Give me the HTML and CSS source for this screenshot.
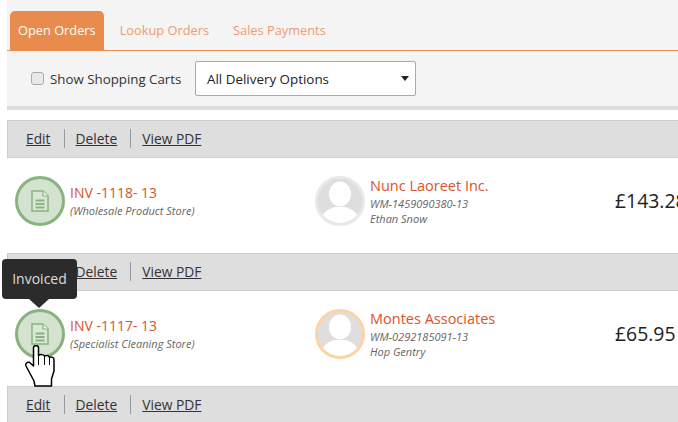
FILE: index.html
```html
<!DOCTYPE html>
<html>
<head>
<meta charset="utf-8" />
<title>Orders</title>
<link rel="stylesheet" href="styles.css">
</head>
<body>
<div class="page">
	<div class="tabs">
		<a class="tab active">Open Orders</a>
		<a class="tab">Lookup Orders</a>
		<a class="tab">Sales Payments</a>
	</div>
	<div class="filters">
		<label class="check"><input type="checkbox" /> <span>Show Shopping Carts</span></label>
		<div class="select">All Delivery Options<i class="arrow"></i></div>
	</div>

	<div class="actions">
		<a>Edit</a><a>Delete</a><a>View PDF</a>
	</div>
	<div class="order">
		<div class="invoice">
			<div class="status">
				<svg width="18" height="22" viewBox="0 0 18 22"><path class="doc" d="M1 1h11l5 5v15h-16z"/><path class="fold" d="M12 1v5h5"/><path class="lines" d="M4.500 10.500h9M4.500 14h9M4.500 17.500h9"/></svg>
			</div>
			<div class="info">
				<div class="title">INV -1118- 13</div>
				<div class="sub">(Wholesale Product Store)</div>
			</div>
		</div>
		<div class="customer">
			<div class="avatar">
				<svg width="44" height="44" viewBox="0 0 44 44"><ellipse cx="22" cy="15" rx="11" ry="12.500" fill="#fff"/><path d="M2 44c1-11 10-15 15-16h10c5 1 14 5 15 16z" fill="#fff"/></svg>
			</div>
			<div class="info">
				<div class="name">Nunc Laoreet Inc.</div>
				<div class="sub">WM-1459090380-13</div>
				<div class="sub">Ethan Snow</div>
			</div>
		</div>
		<div class="price">£143.28</div>
	</div>

	<div class="actions">
		<a>Edit</a><a>Delete</a><a>View PDF</a>
	</div>
	<div class="order">
		<div class="invoice">
			<div class="status">
				<svg width="18" height="22" viewBox="0 0 18 22"><path class="doc" d="M1 1h11l5 5v15h-16z"/><path class="fold" d="M12 1v5h5"/><path class="lines" d="M4.500 10.500h9M4.500 14h9M4.500 17.500h9"/></svg>
				<div class="tip">Invoiced</div>
				<svg class="hand" width="31" height="43" viewBox="0 0 31 43"><path d="M8.500 21V2.500c0-2.500 5-2.500 5 0v8c2-1.500 5-1 6 .5 2-1 4.500-.5 5 1.500 2-1 4.500 0 4.500 2V26l-2.500 8v7H10l-1-5-8-15c-1-2 1-4 3-4z" fill="#fff" stroke="#000" stroke-width="1.500" stroke-linejoin="round"/><path d="M13.500 10v10M19.500 11v9M24.500 13v7" stroke="#000" stroke-width="1" fill="none"/></svg>
			</div>
			<div class="info">
				<div class="title">INV -1117- 13</div>
				<div class="sub">(Specialist Cleaning Store)</div>
			</div>
		</div>
		<div class="customer">
			<div class="avatar warm">
				<svg width="44" height="44" viewBox="0 0 44 44"><ellipse cx="22" cy="15" rx="11" ry="12.500" fill="#fff"/><path d="M2 44c1-11 10-15 15-16h10c5 1 14 5 15 16z" fill="#fff"/></svg>
			</div>
			<div class="info">
				<div class="name">Montes Associates</div>
				<div class="sub">WM-0292185091-13</div>
				<div class="sub">Hop Gentry</div>
			</div>
		</div>
		<div class="price">£65.95</div>
	</div>

	<div class="actions">
		<a>Edit</a><a>Delete</a><a>View PDF</a>
	</div>
</div>
</body>
</html>
```
FILE: styles.css
```css
*{ margin:0; padding:0; box-sizing:border-box;}
html,body{ height:100%; overflow:hidden; background:#fff;}
body{ font-family:"Open Sans",sans-serif; font-size:14px; color:#333;}
.page{ width:800px; margin-left:7px;}

.tabs{ display:flex; height:51px; padding:11px 0 0 3px; background:#f4f4f4; border-bottom:1px solid #e98b4c;}
.tab{ height:39px; padding:0 8px; margin-right:8px; line-height:39px; font-size:12.800px; color:#ef9a72;}
.tab.active{ background:#e98b4c; color:#fff; border-radius:5px 5px 0 0;}

.filters{ display:flex; align-items:center; height:59px; padding:0 0 0 24px; background:#f4f4f4; border-bottom:4px solid #dcdcdc;}
.check{ display:flex; align-items:center; width:164px; font-size:13.300px; color:#333;}
.check input{ appearance:none; width:13px; height:13px; margin-right:6px; background:#e9e9e9; border:1px solid #aaa; border-radius:3px;}
.select{ position:relative; width:221px; height:35px; line-height:35px; padding-left:11px; background:#fff; border:1px solid #aaa; border-radius:2px; font-size:13.400px; color:#222;}
.arrow{ position:absolute; right:6px; top:14px; border:4px solid transparent; border-top:5px solid #222; border-bottom:0;}

.actions{ display:flex; align-items:center; height:38px; padding:0 0 2px 7px; background:#dedede; border:1px solid #ccc; border-right:0;}
.filters + .actions{ margin-top:10px;}
.actions a{ padding:0 13px 0 11px; font-size:13.800px; line-height:19px; color:#333; text-decoration:underline; border-left:1px solid #999;}
.actions a:first-child{ border-left:0;}

.order{ display:flex; align-items:flex-start; height:95px; padding-top:18px; background:#fff;}
.invoice{ display:flex; width:308px; padding-left:8px;}
.invoice .info{ padding-top:7px;}
.status{ position:relative; display:flex; align-items:center; justify-content:center; flex:none; width:50px; height:50px; margin-right:5px; border:3px solid #8ab27f; border-radius:50%; background:#d3e3d0;}
.doc{ fill:#d8e8d5; stroke:#8ab27f; stroke-width:1.500;}
.fold{ fill:#eef5ec; stroke:#8ab27f; stroke-width:1.200;}
.lines{ fill:none; stroke:#8ab27f; stroke-width:1.800;}
.title{ font-size:14px; line-height:19px; color:#d9532c;}
.sub{ font-size:11px; line-height:15px; font-style:italic; color:#666;}
.title + .sub{ margin-top:1px;}

.tip{ position:absolute; left:-16px; top:-53px; width:75px; height:40px; line-height:40px; text-align:center; background:#2b2b2b; color:#ddd; font-size:14px; border-radius:4px;}
.tip:after{ content:""; position:absolute; left:27px; top:40px; border:10px solid transparent; border-top:9px solid #2b2b2b; border-bottom:0;}
.hand{ position:absolute; left:7px; top:33px;}

.customer{ display:flex; width:300px;}
.avatar{ flex:none; display:flex; align-items:flex-end; justify-content:center; width:50px; height:50px; margin-right:5px; overflow:hidden; background:#dedede; border:3px solid #e8e8e8; border-radius:50%;}
.avatar.warm{ border-color:#fdd3a6;}
.name{ font-size:14.500px; line-height:19px; margin-bottom:1px; color:#d9532c;}
.price{ font-size:19.400px; line-height:50px; color:#222;}
```
